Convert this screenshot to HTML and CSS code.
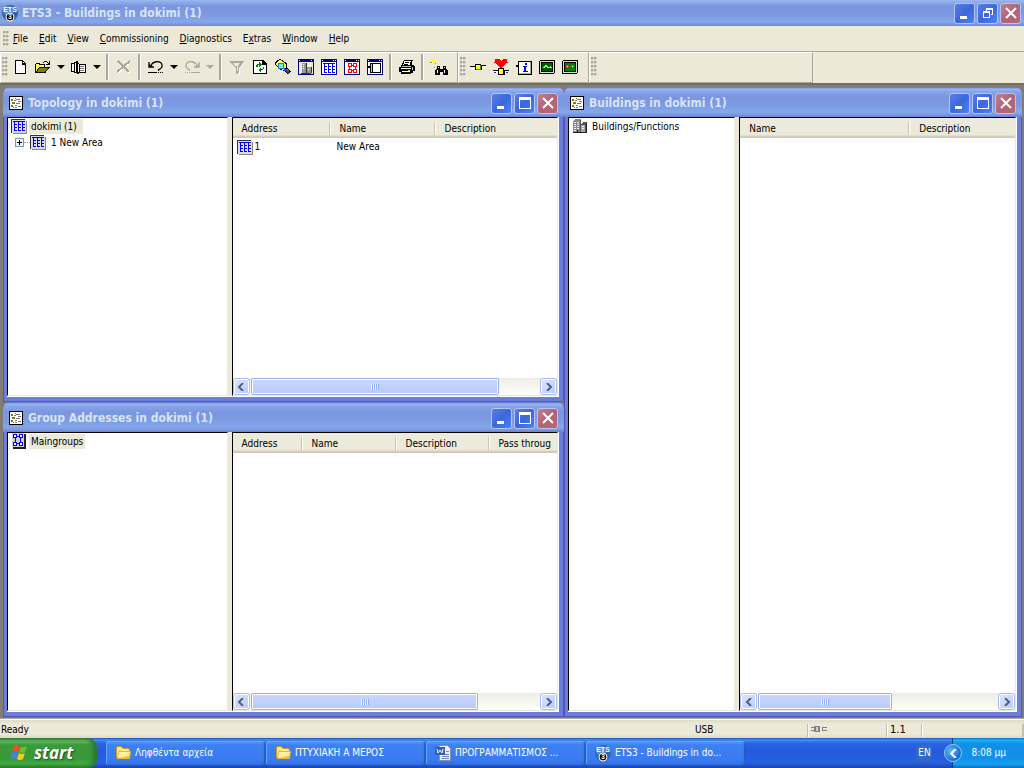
FILE: index.html
```html
<!DOCTYPE html>
<html lang="en">
<head>
<meta charset="utf-8">
<title>ETS3 - Buildings in dokimi (1)</title>
<link rel="stylesheet" href="styles.css">
</head>
<body>
<svg class="defs" aria-hidden="true">
  <symbol id="i-ets" viewBox="0 0 16 16" overflow="visible"><circle cx="8" cy="8" r="8" fill="#2f64a8"/><circle cx="6" cy="6" r="5" fill="#5c8cc4"/><text x="8" y="7" text-anchor="middle" class="ets-text">ETS</text><circle cx="8" cy="12" r="4" fill="#000" stroke="#fff" stroke-width="1"/><text x="8" y="14" text-anchor="middle" class="ets-text">3</text></symbol>
  <symbol id="i-doc" viewBox="0 0 14 14"><path fill="#000" d="M0 0h14v14H0z"/><path fill="#fff" d="M1 1h12v12H1z"/><path fill="#808000" d="M2 3h2v2H2zM4 6h2v2H4zM2 9h2v2H2zM6 2h1v1H6zM4 11h1v1H4z"/><path fill="#777" d="M7 3h4v1H7zM5 4h2v1H5zM7 7h4v1H7zM9 5h3v1H9zM6 9h2v1H6zM9 10h3v1H9zM6 11h2v1H6zM3 6h1v2H3z"/></symbol>
  <symbol id="i-grid" viewBox="0 0 16 15"><path fill="#888" d="M2 2h14v13H2z"/><path fill="#333" d="M0 0h14v1H1v13H0z"/><path fill="#dcdce4" d="M1 1h14v13H1z"/><path fill="#0000f0" d="M2 2h12v1H2zM3 5h3v1H3zM7 5h3v1H7zM11 5h3v1h-3zM3 8h3v1H3zM7 8h3v1H7zM11 8h3v1h-3zM3 11h3v1H3zM7 11h3v1H7zM11 11h3v1h-3zM3 3h1v9H3zM7 3h1v9H7zM11 3h1v9h-1z"/></symbol>
  <symbol id="i-groups" viewBox="0 0 14 15"><path fill="#222" d="M1 1h13v14H1z"/><path fill="#d0d0d8" d="M0 0h12v13H0z"/><path fill="#fff" d="M2 2h3v3H2zM7 2h3v3H7zM2 8h3v3H2zM7 8h3v3H7z"/><path fill="#0000f0" fill-rule="evenodd" d="M1 1h4v4H1zM2 2v2h2V2zM7 1h4v4H7zM8 2v2h2V2zM1 8h4v4H1zM2 9v2h2V9zM7 8h4v4H7zM8 9v2h2V9zM5 3h2v1H5zM5 9h2v1H5zM3 5h1v3H3zM8 5h1v3H8z"/></symbol>
  <symbol id="i-building" viewBox="0 0 16 14"><path fill="#888" d="M1 2l2-2h6l-1 2v11H1z"/><path fill="#555" d="M8 2l1-2v13H8zM9 5l2-2h4v10l-1 1H9z"/><path fill="#a8a8a8" d="M9 6h4v8H9z"/><path fill="#e8f4f4" d="M2 3h2v1H2zM5 3h2v1H5zM2 5h2v1H2zM5 5h2v1H5zM2 7h2v1H2zM5 7h2v1H5zM2 9h2v1H2zM5 9h2v1H5zM2 11h2v1H2zM10 7h2v1h-2zM10 9h2v1h-2z"/><path fill="#222" d="M1 13h14v1H1zM5 11h1v2H5zM14 4h1v9h-1z"/></symbol>
  <symbol id="i-new" viewBox="0 0 16 16"><path fill="#000" d="M3 1h8v1h1v1h1v1h1v11H3z"/><path fill="#fff" d="M4 2h6v4h3v8H4zM11 3h1v1h-1z"/><path fill="#000" d="M10 2h1v3h3v1h-4z"/></symbol>
  <symbol id="i-open" viewBox="0 0 16 16"><path fill="#000" d="M0 5h1V4h4v1h5v3h5v1h-1v1h-1v1h-1v1h-1v2H0z"/><path fill="#ffff60" d="M1 6V5h3v1h5v2H4v1H3v1H2v2H1z"/><path fill="#808000" d="M4 9h9v1h-1v1h-1v1h-1v1H2v-1h1v-2h1z"/><path fill="#000" d="M9 2h3v1H9zM8 3h1v1H8zM12 3h1v1h-1zM14 2h1v4h-4V5h2V4h1z"/></symbol>
  <symbol id="i-book" viewBox="0 0 16 16"><path fill="#000" d="M0 4h3V3h2V2h2v2h1v1h7v9H8v1H6v-1H3v-1H0z"/><path fill="#fff" d="M1 5h2v7H1zM4 4h1v9H4zM7 5h1v8H7zM9 6h5v7H9z"/><path fill="#777" d="M9 7h4v1H9zM9 9h4v1H9zM9 11h4v1H9z"/></symbol>
  <symbol id="i-del" viewBox="0 0 16 16"><path d="M3 3l11 11M14 3L2 14" stroke="#fff" stroke-width="2"/><path d="M2 2l11 11M14 2L1 13" stroke="#aca899" stroke-width="2"/></symbol>
  <symbol id="i-undo" viewBox="0 0 16 16"><path d="M3 7c1-5 10-6 11-1 1 3-2 4-4 5M1 3v5h5" fill="none" stroke="currentColor" stroke-width="1.300"/><path fill="currentColor" d="M1 5h1v1h1v1h1v1H1zM0 13h9v1H0zM10 13h1v1h-1zM12 13h1v1h-1zM14 13h1v1h-1zM10 11h1v1h-1z"/></symbol>
  <symbol id="i-funnel" viewBox="0 0 16 16"><path d="M2 3h14l-5 6v6l-2 1V9z" fill="#fff"/><path d="M0 2h15v1l-5 6v5l-3 1V9L1 3z" fill="#aca899"/><path fill="#ece9d8" d="M4 4h7L9 7v5H8V7H6z"/></symbol>
  <symbol id="i-refresh" viewBox="0 0 16 16"><path fill="#000" d="M1 1h10l4 4v10H1z"/><path fill="#fff" d="M2 2h8v4h4v8H2z"/><path fill="#000" d="M10 1h1v4h4v1h-5z"/><path fill="#008000" d="M4 8V6h1V5h2V3l3 3-3 2V6H6v2zM11 8h1v2h-1v1H9v2l-3-2 3-3v2h2z"/></symbol>
  <symbol id="i-find" viewBox="0 0 16 16"><path fill="#000" d="M0 4l2-3 3-1 7 4v4l4 5-3 2-4-3-3-1-6-5z"/><path fill="#ffff40" d="M1 4l4-3 6 4v3l-3 3-6-4z"/><path fill="#808000" d="M5 2l1-1 3 2zM12 9l2 3h-3z"/><circle cx="6" cy="7" r="3" fill="#70e8f0" stroke="#208898"/><path d="M9 10l5 4" stroke="#2040d0" stroke-width="2"/></symbol>
  <symbol id="i-wbuild" viewBox="0 0 16 16"><path fill="#000080" d="M0 0h16v16H0z"/><path fill="#ece9d8" d="M1 3h14v12H1zM1 1h1v1H1zM13 1h1v1h-1z"/><path fill="#999" d="M4 4h5v10H4zM9 8h4v6H9z"/><path fill="#333" d="M8 4h1v10H8zM13 8h1v6h-1zM3 14h10v1H3z"/><path fill="#fff" d="M3 5h1v1H3zM5 5h1v1H5zM3 7h1v1H3zM5 7h1v1H5zM3 9h1v1H3zM5 9h1v1H5zM10 10h1v1h-1zM10 6h3v1h-3z"/></symbol>
  <symbol id="i-wgrid" viewBox="0 0 16 16"><path fill="#000080" d="M0 0h16v16H0z"/><path fill="#fff" d="M1 3h14v12H1zM1 1h1v1H1zM12 1h1v1h-1zM14 1h1v1h-1z"/><path fill="#0000ff" d="M2 4h12v1H2zM3 7h3v1H3zM7 7h3v1H7zM11 7h3v1h-3zM3 10h3v1H3zM7 10h3v1H7zM11 10h3v1h-3zM3 13h3v1H3zM7 13h3v1H7zM11 13h3v1h-3zM3 5h1v8H3zM7 5h1v8H7zM11 5h1v8h-1z"/></symbol>
  <symbol id="i-wgroup" viewBox="0 0 16 16"><path fill="#000080" d="M0 0h16v16H0z"/><path fill="#fff" d="M1 3h14v12H1zM1 1h1v1H1zM12 1h1v1h-1zM14 1h1v1h-1z"/><path fill="#f00" fill-rule="evenodd" d="M4 4h4v4H4zM5 5v2h2V5zM9 4h4v4H9zM10 5v2h2V5zM4 10h4v4H4zM5 11v2h2v-2zM9 10h4v4H9zM10 11v2h2v-2zM8 6h1v1H8zM8 11h1v1H8zM5 8h1v2H5zM11 8h1v2h-1z"/></symbol>
  <symbol id="i-wpanel" viewBox="0 0 16 16"><path fill="#000080" d="M0 0h16v16H0z"/><path fill="#fff" d="M1 3h14v12H1zM1 1h1v1H1zM12 1h1v1h-1zM14 1h1v1h-1z"/><path fill="#000" d="M3 4h11v10H3zM1 7h2v2H1z"/><path fill="#fff" d="M6 5h7v8H6z"/><path fill="#ccc" d="M4 5h1v8H4z"/></symbol>
  <symbol id="i-print" viewBox="0 0 16 16"><path fill="#000" d="M5 1h9v1h-1v4h2v1h1v5h-2v2h-2v1H2v-2H0V8h2V6h1V4h1z"/><path fill="#fff" d="M5 2h7v1h-1v3H4V5h1zM2 9h10v1H2zM3 12h8v1H3z"/><path fill="#000" d="M6 3h4v1H6zM5 5h4v1H5z"/><path fill="#c0c0c0" d="M3 7h9v1H3zM13 8h1v3h-1z"/><path fill="#e8e800" d="M9 11h2v1H9z"/></symbol>
  <symbol id="i-binoc" viewBox="0 0 18 16"><path fill="#ffff00" d="M1 1h4v1h1v2H5v1H4v1H3V4h1V2H2v1H0V2h1zM3 7h1v2H3zM7 3h1v1H7z"/><path fill="#a0a000" d="M0 3h2v1H0zM5 4h1v1H5zM4 8h1v1H4z"/><path fill="#000" d="M7 7h3v3h3V7h3v3h1v1h1v5h-5v-3h-3v3H5v-5h1v-1h1z"/><path fill="#fff" d="M8 8h1v1H8zM7 11h1v3H7zM14 8h1v1h-1zM14 11h1v3h-1z"/></symbol>
  <symbol id="i-link" viewBox="0 0 16 16"><path fill="#000" d="M0 7h5V5h6v1h5v1h-4v4H5V8H0z"/><path fill="#ffff40" d="M6 6h4v4H6z"/><path fill="#fff" d="M0 9h5v1H0zM12 8h4v1h-4z"/><path fill="#808000" d="M6 10h5v1H6zM10 6h1v4h-1z"/></symbol>
  <symbol id="i-down" viewBox="0 0 16 16"><path fill="#f00" d="M2 0h4l2 2 2-2h4v3h1v1h-2v1h-1v1h-1v1h-1v1H9v1H7V8H6V7H5V6H4V5H3V4H1V3h1z"/><path fill="#000" d="M0 11h5V9h6v2h5v1h-4v4H5v-4H0z"/><path fill="#ffff40" d="M6 10h4v5H6z"/><path fill="#fff" d="M0 12h5v2H0zM12 12h4v2h-4z"/><path fill="#2020c0" d="M1 13h2v1H1zM13 13h2v1h-2z"/></symbol>
  <symbol id="i-info" viewBox="0 0 16 16"><path fill="#000" d="M2 2h14v14H2zM0 6h2v2H0z"/><path fill="#fff" d="M3 3h12v12H3z"/><path fill="#aaa" d="M3 14h12v1H3zM14 3h1v12h-1z"/><path fill="#0000ff" d="M9 4h2v2H9zM7 7h4v1h-1v4h2v1H7v-1h1V8H7z"/></symbol>
  <symbol id="i-scope" viewBox="0 0 16 14"><rect width="16" height="14" rx="2" fill="#000"/><path fill="#ddd" d="M1 1h14v12H1z"/><path fill="#000" d="M2 2h12v10H2z"/><path fill="#006000" d="M3 3h10v8H3z"/><path fill="#80ff80" d="M4 7h1V6h1V5h2v1h1v1h2V6h1v1h1v1H8V7H6v1H4z"/><path fill="#002800" d="M4 9h1v1H4zM6 9h1v1H6zM8 9h1v1H8zM10 9h1v1h-1z"/></symbol>
  <symbol id="i-tele" viewBox="0 0 16 14"><rect width="16" height="14" rx="2" fill="#000"/><path fill="#ddd" d="M1 1h14v12H1z"/><path fill="#000" d="M2 2h12v10H2z"/><path fill="#008000" d="M3 3h10v8H3z"/><path fill="#ff2020" d="M4 5h3v3H4zM9 5h3v3H9z"/><path fill="#fff" d="M5 6h1v1H5zM10 6h1v1h-1z"/></symbol>
  <symbol id="i-min" viewBox="0 0 12 12"><path fill="#fff" d="M1 9h7v3H1z"/></symbol>
  <symbol id="i-max" viewBox="0 0 12 12"><path fill="#fff" fill-rule="evenodd" d="M0 0h12v12H0zM1 3v8h10V3z"/></symbol>
  <symbol id="i-restore" viewBox="0 0 12 12"><path fill="#fff" fill-rule="evenodd" d="M4 1h7v7H9V7h1V3H5v1H4zM1 4h7v7H1zM2 6v4h5V6z"/></symbol>
  <symbol id="i-close" viewBox="0 0 12 12"><path d="M1 1l10 10M11 1L1 11" stroke="#fff" stroke-width="2"/></symbol>
  <symbol id="i-left" viewBox="0 0 8 8"><path d="M6 0L2 4l4 4" fill="none" stroke="currentColor" stroke-width="2"/></symbol>
  <symbol id="i-right" viewBox="0 0 8 8"><path d="M2 0l4 4-4 4" fill="none" stroke="currentColor" stroke-width="2"/></symbol>
  <symbol id="i-folder" viewBox="0 0 16 14"><path fill="#c89820" d="M1 2q0-2 2-2h3l2 2h5q2 0 2 2v8q0 1-2 1H3q-2 0-2-2z"/><path fill="#ffe890" d="M2 2q0-1 1-1h3l2 2h5q1 0 1 1v7H2z"/><path fill="#e8b838" d="M3 13q-1 0-1-1l1-6q0-1 1-1h11q1 0 1 1l-1 6q0 1-1 1z"/><path fill="#fff0a0" d="M4 12l-1-1 1-5h11l-1 4z"/></symbol>
  <symbol id="i-word" viewBox="0 0 16 16"><path fill="#e8eefa" stroke="#8090b0" d="M4.500.500h8l3 3v12h-11z"/><path fill="#7088b8" d="M7 9h7v1H7zM7 11h7v1H7zM7 13h7v1H7zM11 6h3v1h-3z"/><path fill="#3060b8" d="M0 2h10v8H0z"/><path d="M2 4l1 4 2-3 2 3 1-4" fill="none" stroke="#fff"/></symbol>
  <symbol id="i-flag" viewBox="0 0 18 17"><path fill="#f05020" d="M4 2q3-2 6 0L8 8Q5 6 2 8z"/><path fill="#70c030" d="M11 3q3 1 6-1l-2 6q-3 2-6 0z"/><path fill="#4080f0" d="M2 9q3-2 6 0l-2 6q-3-2-6 0z"/><path fill="#ffc820" d="M9 9q3 2 6 0l-2 6q-3 2-6 0z"/></symbol>
  <symbol id="i-plug" viewBox="0 0 16 6"><path fill="#808080" d="M0 1h4v1H0zM0 4h4v1H0zM3 0h6v6H3zM11 1h5v1h-4v2h4v1h-5z"/><path fill="#d0d0d0" d="M5 1h2v4H5z"/></symbol>
</svg>

<header class="titlebar app-title">
  <svg class="ic16 smooth"><use href="#i-ets"/></svg>
  <h1>ETS3 - Buildings in dokimi (1)</h1>
  <div class="winbtns">
    <button aria-label="Minimize"><svg><use href="#i-min"/></svg></button>
    <button aria-label="Restore"><svg><use href="#i-restore"/></svg></button>
    <button class="close" aria-label="Close"><svg class="smooth"><use href="#i-close"/></svg></button>
  </div>
</header>

<nav class="menubar">
  <span class="grip"></span>
  <button><u>F</u>ile</button><button><u>E</u>dit</button><button><u>V</u>iew</button><button><u>C</u>ommissioning</button><button><u>D</u>iagnostics</button><button>E<u>x</u>tras</button><button><u>W</u>indow</button><button><u>H</u>elp</button>
</nav>

<div class="toolbars">
  <div class="band" role="toolbar" aria-label="Standard">
    <span class="grip"></span>
    <button aria-label="New"><svg class="ic16"><use href="#i-new"/></svg></button>
    <button aria-label="Open"><svg class="ic16"><use href="#i-open"/></svg></button>
    <button class="dd" aria-label="Open list"></button>
    <button aria-label="Catalog"><svg class="ic16"><use href="#i-book"/></svg></button>
    <button class="dd" aria-label="Catalog list"></button>
    <span class="sep"></span>
    <button aria-label="Delete"><svg class="ic16"><use href="#i-del"/></svg></button>
    <span class="sep"></span>
    <button aria-label="Undo"><svg class="ic16 smooth"><use href="#i-undo"/></svg></button>
    <button class="dd" aria-label="Undo list"></button>
    <button class="off" aria-label="Redo"><svg class="ic16 smooth flip"><use href="#i-undo"/></svg></button>
    <button class="dd off" aria-label="Redo list"></button>
    <span class="sep"></span>
    <button aria-label="Filter"><svg class="ic16 smooth"><use href="#i-funnel"/></svg></button>
    <button aria-label="Refresh"><svg class="ic16"><use href="#i-refresh"/></svg></button>
    <button aria-label="Product finder"><svg class="ic16"><use href="#i-find"/></svg></button>
    <button aria-label="Buildings"><svg class="ic16"><use href="#i-wbuild"/></svg></button>
    <button aria-label="Topology"><svg class="ic16"><use href="#i-wgrid"/></svg></button>
    <button aria-label="Group addresses"><svg class="ic16"><use href="#i-wgroup"/></svg></button>
    <button aria-label="Devices"><svg class="ic16"><use href="#i-wpanel"/></svg></button>
    <span class="sep"></span>
    <button aria-label="Print"><svg class="ic16"><use href="#i-print"/></svg></button>
    <span class="sep"></span>
    <button aria-label="Find"><svg class="ic18"><use href="#i-binoc"/></svg></button>
  </div>
  <div class="band" role="toolbar" aria-label="Commissioning">
    <span class="grip"></span>
    <button aria-label="Connect"><svg class="ic16"><use href="#i-link"/></svg></button>
    <button aria-label="Download"><svg class="ic16"><use href="#i-down"/></svg></button>
    <button aria-label="Device info"><svg class="ic16"><use href="#i-info"/></svg></button>
    <button aria-label="Bus monitor"><svg class="ic16"><use href="#i-scope"/></svg></button>
    <button aria-label="Group monitor"><svg class="ic16"><use href="#i-tele"/></svg></button>
  </div>
  <div class="band spare"><span class="grip"></span></div>
</div>

<main class="workspace">
  <div class="stack">
    <section class="win">
      <header class="titlebar">
        <svg class="ic14"><use href="#i-doc"/></svg><h2>Topology in dokimi (1)</h2>
        <div class="winbtns">
          <button aria-label="Minimize"><svg><use href="#i-min"/></svg></button>
          <button aria-label="Maximize"><svg><use href="#i-max"/></svg></button>
          <button class="close" aria-label="Close"><svg class="smooth"><use href="#i-close"/></svg></button>
        </div>
      </header>
      <div class="panes">
        <ul class="tree">
          <li><svg class="ic16"><use href="#i-grid"/></svg><button class="node selected wide">dokimi (1)</button></li>
          <li class="child"><button class="plus" aria-label="Expand"></button><span class="dots"></span><svg class="ic16"><use href="#i-grid"/></svg><button class="node">1 New Area</button></li>
        </ul>
        <div class="list">
          <table>
            <colgroup><col class="w98"><col class="w105"><col></colgroup>
            <thead><tr><th>Address</th><th>Name</th><th>Description</th></tr></thead>
            <tbody><tr><td><span class="cell"><svg class="ic16"><use href="#i-grid"/></svg>1</span></td><td>New Area</td><td></td></tr></tbody>
          </table>
          <div class="scroll"><button aria-label="Scroll left"><svg class="smooth"><use href="#i-left"/></svg></button><div class="track"><div class="thumb t-topology"></div></div><button aria-label="Scroll right"><svg class="smooth"><use href="#i-right"/></svg></button></div>
        </div>
      </div>
    </section>
    <section class="win">
      <header class="titlebar">
        <svg class="ic14"><use href="#i-doc"/></svg><h2>Group Addresses in dokimi (1)</h2>
        <div class="winbtns">
          <button aria-label="Minimize"><svg><use href="#i-min"/></svg></button>
          <button aria-label="Maximize"><svg><use href="#i-max"/></svg></button>
          <button class="close" aria-label="Close"><svg class="smooth"><use href="#i-close"/></svg></button>
        </div>
      </header>
      <div class="panes">
        <ul class="tree">
          <li><svg class="ic16"><use href="#i-groups"/></svg><button class="node selected">Maingroups</button></li>
        </ul>
        <div class="list">
          <table>
            <colgroup><col class="w70"><col class="w94"><col class="w93"><col></colgroup>
            <thead><tr><th>Address</th><th>Name</th><th>Description</th><th>Pass throug</th></tr></thead>
          </table>
          <div class="scroll"><button aria-label="Scroll left"><svg class="smooth"><use href="#i-left"/></svg></button><div class="track"><div class="thumb t-groups"></div></div><button aria-label="Scroll right"><svg class="smooth"><use href="#i-right"/></svg></button></div>
        </div>
      </div>
    </section>
  </div>
  <section class="win buildings">
    <header class="titlebar">
      <svg class="ic14"><use href="#i-doc"/></svg><h2>Buildings in dokimi (1)</h2>
      <div class="winbtns">
        <button aria-label="Minimize"><svg><use href="#i-min"/></svg></button>
        <button aria-label="Maximize"><svg><use href="#i-max"/></svg></button>
        <button class="close" aria-label="Close"><svg class="smooth"><use href="#i-close"/></svg></button>
      </div>
    </header>
    <div class="panes">
      <ul class="tree">
        <li><svg class="ic16"><use href="#i-building"/></svg><button class="node">Buildings/Functions</button></li>
      </ul>
      <div class="list">
        <table>
          <colgroup><col class="w170"><col></colgroup>
          <thead><tr><th>Name</th><th>Description</th></tr></thead>
        </table>
        <div class="scroll"><button aria-label="Scroll left"><svg class="smooth"><use href="#i-left"/></svg></button><div class="track"><div class="thumb t-buildings"></div></div><button aria-label="Scroll right"><svg class="smooth"><use href="#i-right"/></svg></button></div>
      </div>
    </div>
  </section>
</main>

<div class="status">
  <span class="grow">Ready</span><span class="usb">USB</span><span class="cellbox plug"><svg><use href="#i-plug"/></svg></span><span class="cellbox addr">1.1</span><span class="cellbox rest"></span>
</div>

<footer class="taskbar">
  <button class="start"><svg class="smooth"><use href="#i-flag"/></svg>start</button>
  <div class="tasks">
    <button><svg class="ic16 smooth"><use href="#i-folder"/></svg><span>Ληφθέντα αρχεία</span></button>
    <button><svg class="ic16 smooth"><use href="#i-folder"/></svg><span>ΠΤΥΧΙΑΚΗ Α ΜΕΡΟΣ</span></button>
    <button><svg class="ic16 smooth"><use href="#i-word"/></svg><span>ΠΡΟΓΡΑΜΜΑΤΙΣΜΟΣ ...</span></button>
    <button><svg class="ic16 smooth"><use href="#i-ets"/></svg><span>ETS3 - Buildings in do...</span></button>
  </div>
  <button class="lang">EN</button>
  <div class="tray"><button aria-label="Show hidden icons"><svg class="smooth"><use href="#i-left"/></svg></button><time>8:08 μμ</time></div>
</footer>
</body>
</html>
```

FILE: styles.css
```css
* { box-sizing: border-box; }
html, body { height: 100%; }
body {
  margin: 0;
  display: flex;
  flex-direction: column;
  overflow: hidden;
  background: #ece9d8;
  color: #000;
  font: 10px/16px "DejaVu Sans Condensed", "DejaVu Sans", sans-serif;
}
button { margin: 0; padding: 0; border: 0; background: none; color: inherit; font: inherit; white-space: nowrap; }
h1, h2 { margin: 0; font-size: 12px; line-height: 16px; font-weight: bold; white-space: nowrap; }
ul { margin: 0; padding: 0; list-style: none; }
svg { display: block; flex: none; overflow: visible; shape-rendering: crispEdges; }
.smooth { shape-rendering: auto; }
.defs { position: absolute; width: 0; height: 0; }
.ets-text { font: bold 7px "Liberation Sans", sans-serif; fill: #fff; }
.ic14 { width: 14px; height: 14px; }
.ic16 { width: 16px; height: 16px; }
.ic18 { width: 18px; height: 16px; }
.flip { transform: scaleX(-1); }

/* Title bars */
.titlebar {
  display: flex;
  align-items: center;
  gap: 5px;
  flex: none;
  height: 30px;
  padding: 2px 6px 0 6px;
  color: #d8e4f8;
  background: linear-gradient(#5a6fd0 0, #9cb6f0 2px, #86a2e8 5px, #7a96df 10px, #7c9ae2 18px, #84a8ea 25px, #7a96e0 28px, #6c7ed4 30px);
}
.app-title { height: 26px; gap: 4px; padding: 0 3px 0 2px; background: linear-gradient(#9cb8f0, #7a96df 6px, #7c9ae2 15px, #84a8ea 22px, #7484d8 26px); }
.winbtns { display: flex; gap: 2px; margin-left: auto; }
.winbtns button {
  display: grid;
  place-items: center;
  width: 21px;
  height: 21px;
  border: 1px solid #b4c4f4;
  border-radius: 3px;
  background: linear-gradient(135deg, #5c80e0, #3c66dc 50%, #4a84f4);
}
.winbtns .close { background: linear-gradient(135deg, #c08090, #b06478 50%, #b86870); }
.winbtns svg { width: 12px; height: 12px; }

/* Menu and toolbars */
.grip {
  flex: none;
  width: 6px;
  background: radial-gradient(circle at 1px 1px, #aca899 1px, transparent 2px) 0 0 / 3px 4px;
}
.menubar { display: flex; align-items: center; gap: 1px; flex: none; height: 26px; padding-left: 3px; padding-top: 1px; border-bottom: 1px solid #aca899; }
.menubar .grip { height: 16px; margin-right: -2px; }
.menubar button { padding: 0 5px; }
.menubar u { text-underline-offset: 1px; }
.toolbars { display: flex; flex: none; height: 31px; }
.band {
  display: flex;
  align-items: center;
  padding: 0 7px 2px 1px;
  border: 1px solid #aca899;
  border-top-color: #fff;
  border-left-color: #fff;
}
.band .grip { height: 20px; }
.band button { display: grid; place-items: center; width: 23px; height: 22px; }
.band .dd { width: 13px; }
.dd::before { content: ""; border: 4px solid transparent; border-top-color: #000; border-bottom: 0; }
.off { color: #aca899; }
.off::before { border-top-color: #aca899; }
.sep { width: 9px; height: 26px; display: flex; justify-content: center; }
.sep::before { content: ""; width: 2px; background: #aca899; border-right: 1px solid #fff; }
.spare { flex: 0 1 224px; }

/* Document windows */
.workspace {
  flex: 1;
  min-height: 0;
  display: grid;
  grid-template-columns: 561fr 458fr;
  padding: 2px 2px 1px 3px;
  border-top: 2px solid #716f64;
  border-bottom: 1px solid #aca899;
  background: #807e74;
}
.stack { display: grid; grid-template-rows: 1fr 1fr; min-width: 0; min-height: 0; }
.win {
  display: flex;
  flex-direction: column;
  min-width: 0;
  min-height: 0;
  border-radius: 7px 7px 0 0;
  overflow: hidden;
  background: #6c7ed8;
  box-shadow: inset 0 0 0 1px #5058b8;
}
.panes {
  flex: 1;
  min-height: 0;
  display: grid;
  grid-template-columns: 221fr 331fr;
  margin: 0 5px 5px 4px;
  overflow: hidden;
  background: #fff;
  border-right: 1px solid #fff;
  border-bottom: 1px solid #fff;
}
.buildings .panes { grid-template-columns: 168fr 282fr; }
.tree { min-width: 0; padding-left: 3px; background: #fff; border: 1px solid #000; border-right-color: #ece9d8; border-bottom-color: #ece9d8; }
.tree li { display: flex; align-items: center; gap: 2px; height: 16px; }
.tree .child { gap: 0; padding-left: 4px; }
.child .node { margin-left: 3px; }
.node { padding: 0 2px; line-height: 15px; }
.selected { background: #ece9d8; }
.wide { padding-right: 6px; }
.plus {
  width: 9px;
  height: 9px;
  border: 1px solid #7898b5;
  background: linear-gradient(#000, #000) center / 5px 1px no-repeat, linear-gradient(#000, #000) center / 1px 5px no-repeat, #f4f2ea;
}
.dots { width: 6px; border-top: 1px dotted #aca899; }
.list {
  display: flex;
  flex-direction: column;
  min-width: 0;
  margin-left: 4px;
  border: 1px solid #000;
  border-right-color: #ece9d8;
  border-bottom-color: #ece9d8;
  overflow: hidden;
  background: #fff;
  outline: 4px solid #ece9d8;
}
table { table-layout: fixed; width: 100%; border-collapse: collapse; }
th, td { padding: 0; font-weight: normal; text-align: left; white-space: nowrap; overflow: hidden; }
th {
  height: 20px;
  padding: 1px 0 0 9px;
  background: linear-gradient(#fff, #fff) right 4px / 1px 13px no-repeat, linear-gradient(90deg, #c7c5b2, #c7c5b2) right 4px / 2px 13px no-repeat, linear-gradient(#ebeadb 17px, #d6d2c2 18px, #cbc7b8 20px);
}
th:last-child { background: linear-gradient(#ebeadb 17px, #d6d2c2 18px, #cbc7b8 20px); }
td { height: 18px; padding-left: 6px; }
.cell { display: flex; align-items: center; gap: 2px; }
td:first-child { padding-left: 4px; }
.w98 { width: 98px; } .w105 { width: 105px; } .w70 { width: 70px; } .w94 { width: 94px; } .w93 { width: 93px; } .w170 { width: 170px; }

/* Scroll bars */
.scroll { display: flex; height: 17px; margin-top: auto; background: linear-gradient(#eeede5, #fefefb); }
.scroll button {
  display: grid;
  place-items: center;
  width: 17px;
  height: 17px;
  border: 1px solid #a8bcf0;
  border-radius: 3px;
  box-shadow: inset 0 0 0 1px #fff;
  background: linear-gradient(135deg, #dce6fe, #b8cafa);
  color: #4d6185;
}
.scroll svg { width: 8px; height: 8px; }
.track { flex: 1; padding: 0 1px; }
.thumb {
  height: 17px;
  border: 1px solid #98b0e8;
  border-radius: 2px;
  box-shadow: inset 0 0 0 1px #fff;
  background: repeating-linear-gradient(90deg, #eef4fe 0 1px, #8cb0f8 1px 2px) center / 8px 6px no-repeat, linear-gradient(#c8d6fb, #c0d0fc 60%, #b8c8f4);
}
.t-topology { width: 86%; }
.t-groups { width: 79%; }
.t-buildings { width: 56%; }

/* Status bar */
.status { display: flex; align-items: center; flex: none; height: 19px; padding: 2px 0 0 1px; border-top: 1px solid #fff; background: linear-gradient(#dedbc8, #ece9d8 4px, #ece9d8 14px, #dcd9c6); }
.status .grow { flex: 1; }
.usb { width: 112px; }
.cellbox { display: flex; align-items: center; height: 13px; padding-left: 3px; border-left: 1px solid #c4c0b0; box-shadow: inset 1px 0 0 #fff; }
.plug { width: 79px; }
.plug svg { width: 16px; height: 6px; margin-bottom: 3px; }
.addr { width: 35px; font-size: 11px; }
.rest { width: 103px; border-right: 2px solid #c4c0b0; }

/* Taskbar */
.taskbar { display: flex; flex: none; height: 30px; color: #fff; background: linear-gradient(#1f4fb8 0, #4390f0 2px, #2a66e0 5px, #245adc 12px, #2660e0 25px, #1c44ac 30px); }
.start {
  display: flex;
  align-items: center;
  gap: 6px;
  width: 97px;
  padding: 0 0 1px 10px;
  border-radius: 0 9px 9px 0;
  background: linear-gradient(#2e7a2e 0, #66b866 3px, #3c9a3c 7px, #38983a 20px, #3fae40 26px, #2c7c2e 30px);
  box-shadow: inset -4px 0 5px #2a7430;
  font: italic bold 17px/20px "Open Sans", sans-serif;
  text-shadow: 1px 1px 2px #1c4c1c;
}
.start svg { width: 18px; height: 17px; }
.tasks { display: flex; flex: 1; gap: 1px; min-width: 0; padding: 3px 0 3px 9px; }
.tasks button {
  display: flex;
  align-items: center;
  gap: 4px;
  flex: 0 1 159px;
  min-width: 0;
  padding: 0 8px 0 9px;
  border-radius: 3px;
  background: linear-gradient(#5c9cfc, #3c80f4 4px, #3a7cf0 18px, #3470e4);
  box-shadow: inset 1px 1px 1px #68a4fc, inset -1px 0 1px #2458c4;
}
.tasks span { overflow: hidden; }
.lang { align-self: center; width: 16px; margin-right: 20px; background: #316ac5; }
.tray { display: flex; align-items: center; flex: none; padding-right: 18px; border-left: 1px solid #0c3c90; background: linear-gradient(#0c70d0 0, #1cb0f4 2px, #1290e8 6px, #1290e8 20px, #14a0f0 26px, #0c68c0 30px); }
.tray button { display: grid; place-items: center; width: 18px; height: 18px; margin: 0 9px 0 -9px; border: 1px solid #8cd0fc; border-radius: 9px; background: radial-gradient(circle at 6px 6px, #60b8f8, #1868d0 70%); }
.tray svg { width: 9px; height: 9px; }
```
